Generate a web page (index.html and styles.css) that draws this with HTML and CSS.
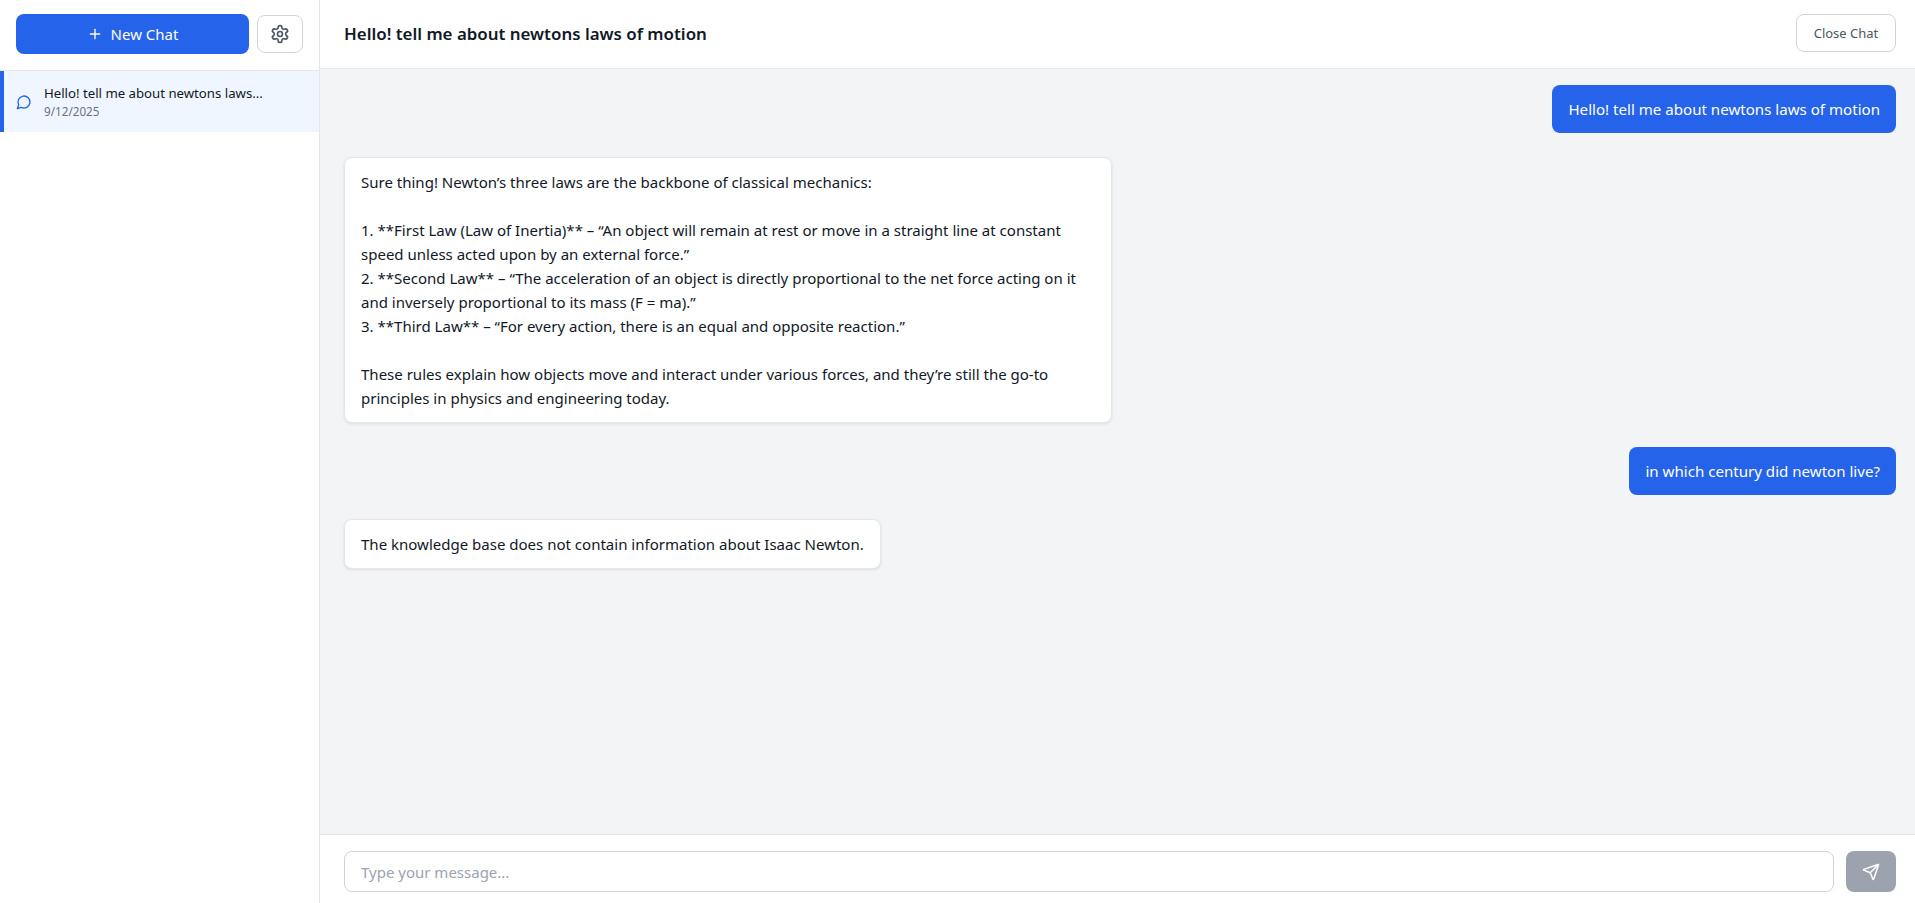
FILE: index.html
```html
<!DOCTYPE html>
<html lang="en">
<head>
    <meta charset="UTF-8">
    <meta name="viewport" content="width=device-width, initial-scale=1.0">
    <title>Chat</title>
    <link rel="stylesheet" href="styles.css">
</head>
<body>
    <div class="app">
        <aside class="sidebar">
            <div class="sidebar-top">
                <button class="new-chat">
                    <svg class="icon-plus" viewBox="0 0 24 24"><path d="M5 12h14"/><path d="M12 5v14"/></svg>
                    <span>New Chat</span>
                </button>
                <button class="settings">
                    <svg class="icon-gear" viewBox="0 0 24 24"><path d="M12.22 2h-.44a2 2 0 0 0-2 2v.18a2 2 0 0 1-1 1.73l-.43.25a2 2 0 0 1-2 0l-.15-.08a2 2 0 0 0-2.73.73l-.22.38a2 2 0 0 0 .73 2.73l.15.1a2 2 0 0 1 1 1.72v.51a2 2 0 0 1-1 1.74l-.15.09a2 2 0 0 0-.73 2.73l.22.38a2 2 0 0 0 2.73.73l.15-.08a2 2 0 0 1 2 0l.43.25a2 2 0 0 1 1 1.73V20a2 2 0 0 0 2 2h.44a2 2 0 0 0 2-2v-.18a2 2 0 0 1 1-1.73l.43-.25a2 2 0 0 1 2 0l.15.08a2 2 0 0 0 2.73-.73l.22-.39a2 2 0 0 0-.73-2.73l-.15-.08a2 2 0 0 1-1-1.74v-.5a2 2 0 0 1 1-1.74l.15-.09a2 2 0 0 0 .73-2.73l-.22-.38a2 2 0 0 0-2.73-.73l-.15.08a2 2 0 0 1-2 0l-.43-.25a2 2 0 0 1-1-1.73V4a2 2 0 0 0-2-2z"/><circle cx="12" cy="12" r="3"/></svg>
                </button>
            </div>
            <div class="chat-item">
                <svg class="icon-bubble" viewBox="0 0 24 24"><path d="M7.9 20A9 9 0 1 0 4 16.1L2 22Z"/></svg>
                <div class="chat-item-text">
                    <div class="chat-title">Hello! tell me about newtons laws...</div>
                    <div class="chat-date">9/12/2025</div>
                </div>
            </div>
        </aside>
        <main class="main">
            <header class="header">
                <h1>Hello! tell me about newtons laws of motion</h1>
                <button class="close-chat">Close Chat</button>
            </header>
            <div class="messages">
                <div class="msg user">Hello! tell me about newtons laws of motion</div>
                <div class="msg bot">Sure thing! Newton’s three laws are the backbone of classical mechanics:

1. **First Law (Law of Inertia)** – “An object will remain at rest or move in a straight line at constant speed unless acted upon by an external force.”
2. **Second Law** – “The acceleration of an object is directly proportional to the net force acting on it and inversely proportional to its mass (F = ma).”
3. **Third Law** – “For every action, there is an equal and opposite reaction.”

These rules explain how objects move and interact under various forces, and they’re still the go-to principles in physics and engineering today.</div>
                <div class="msg user">in which century did newton live?</div>
                <div class="msg bot">The knowledge base does not contain information about Isaac Newton.</div>
            </div>
            <footer class="composer">
                <input class="composer-input" type="text" placeholder="Type your message...">
                <button class="send">
                    <svg class="icon-send" viewBox="0 0 24 24"><path d="M14.536 21.686a.5.5 0 0 0 .937-.024l6.5-19a.496.496 0 0 0-.635-.635l-19 6.5a.5.5 0 0 0-.024.937l7.93 3.18a2 2 0 0 1 1.112 1.11z"/><path d="m21.854 2.147-10.94 10.939"/></svg>
                </button>
            </footer>
        </main>
    </div>
</body>
</html>
```

FILE: styles.css
```css
* {
    margin: 0;
    padding: 0;
    box-sizing: border-box;
}
html, body {
    height: 100%;
    overflow: hidden;
}
body {
    font-family: "Noto Sans", sans-serif;
    color: #111827;
    background-color: #fff;
}
button {
    font-family: inherit;
    cursor: pointer;
}
svg {
    fill: none;
    stroke: currentColor;
    stroke-width: 2;
    stroke-linecap: round;
    stroke-linejoin: round;
    flex-shrink: 0;
}
.app {
    display: flex;
    height: 100%;
}
.sidebar {
    width: 320px;
    border-right: 1px solid #e5e7eb;
    display: flex;
    flex-direction: column;
}
.sidebar-top {
    display: flex;
    align-items: center;
    gap: 8px;
    height: 71px;
    padding: 0 16px 2px;
    border-bottom: 1px solid #e5e7eb;
}
.new-chat {
    flex: 1;
    height: 40px;
    display: flex;
    align-items: center;
    justify-content: center;
    gap: 8px;
    background-color: #2563eb;
    color: #fff;
    border: none;
    border-radius: 8px;
    font-size: 15px;
}
.icon-plus {
    width: 16px;
    height: 16px;
}
.settings {
    width: 46px;
    height: 38px;
    display: flex;
    align-items: center;
    justify-content: center;
    background-color: #fff;
    color: #4b5563;
    border: 1px solid #d1d5db;
    border-radius: 8px;
}
.icon-gear {
    width: 20px;
    height: 20px;
}
.chat-item {
    display: flex;
    align-items: center;
    gap: 12px;
    height: 61px;
    padding: 0 12px;
    background-color: #eff6ff;
    border-left: 4px solid #2563eb;
}
.icon-bubble {
    width: 16px;
    height: 16px;
    color: #2563eb;
}
.chat-item-text {
    margin-top: -1px;
}
.chat-title {
    font-size: 13.2px;
    line-height: 20px;
}
.chat-date {
    font-size: 11.7px;
    line-height: 16px;
    color: #6b7280;
}
.main {
    flex: 1;
    min-width: 0;
    display: flex;
    flex-direction: column;
    background-color: #f3f4f6;
}
.header {
    height: 69px;
    display: flex;
    align-items: center;
    justify-content: space-between;
    padding: 0 19px 2px 24px;
    background-color: #fff;
    border-bottom: 1px solid #e5e7eb;
}
.header h1 {
    font-size: 16.9px;
    font-weight: 600;
}
.close-chat {
    width: 100px;
    height: 38px;
    background-color: #fff;
    color: #4b5563;
    border: 1px solid #d1d5db;
    border-radius: 8px;
    font-size: 13px;
}
.messages {
    flex: 1;
    display: flex;
    flex-direction: column;
    gap: 24px;
    padding: 16px 19px 16px 24px;
}
.msg {
    max-width: 768px;
    padding: 12px 16px;
    border-radius: 8px;
    line-height: 24px;
    white-space: pre-wrap;
}
.user {
    align-self: flex-end;
    background-color: #2563eb;
    color: #fff;
    font-size: 15.1px;
}
.bot {
    align-self: flex-start;
    background-color: #fff;
    box-shadow: 0 1px 3px rgba(0,0,0,0.1);
    border: 1px solid #e5e7eb;
    font-size: 15.02px;
}
.composer {
    height: 69px;
    display: flex;
    align-items: flex-start;
    gap: 12px;
    padding: 16px 19px 0 24px;
    background-color: #fff;
    border-top: 1px solid #e5e7eb;
}
.composer-input {
    flex: 1;
    height: 41px;
    padding: 0 16px;
    border: 1px solid #d1d5db;
    border-radius: 8px;
    font-family: inherit;
    font-size: 15px;
}
.composer-input::placeholder {
    color: #9ca3af;
}
.send {
    width: 50px;
    height: 41px;
    display: flex;
    align-items: center;
    justify-content: center;
    background-color: #9ca3af;
    color: #fff;
    border: none;
    border-radius: 8px;
}
.icon-send {
    width: 18px;
    height: 18px;
}
```
